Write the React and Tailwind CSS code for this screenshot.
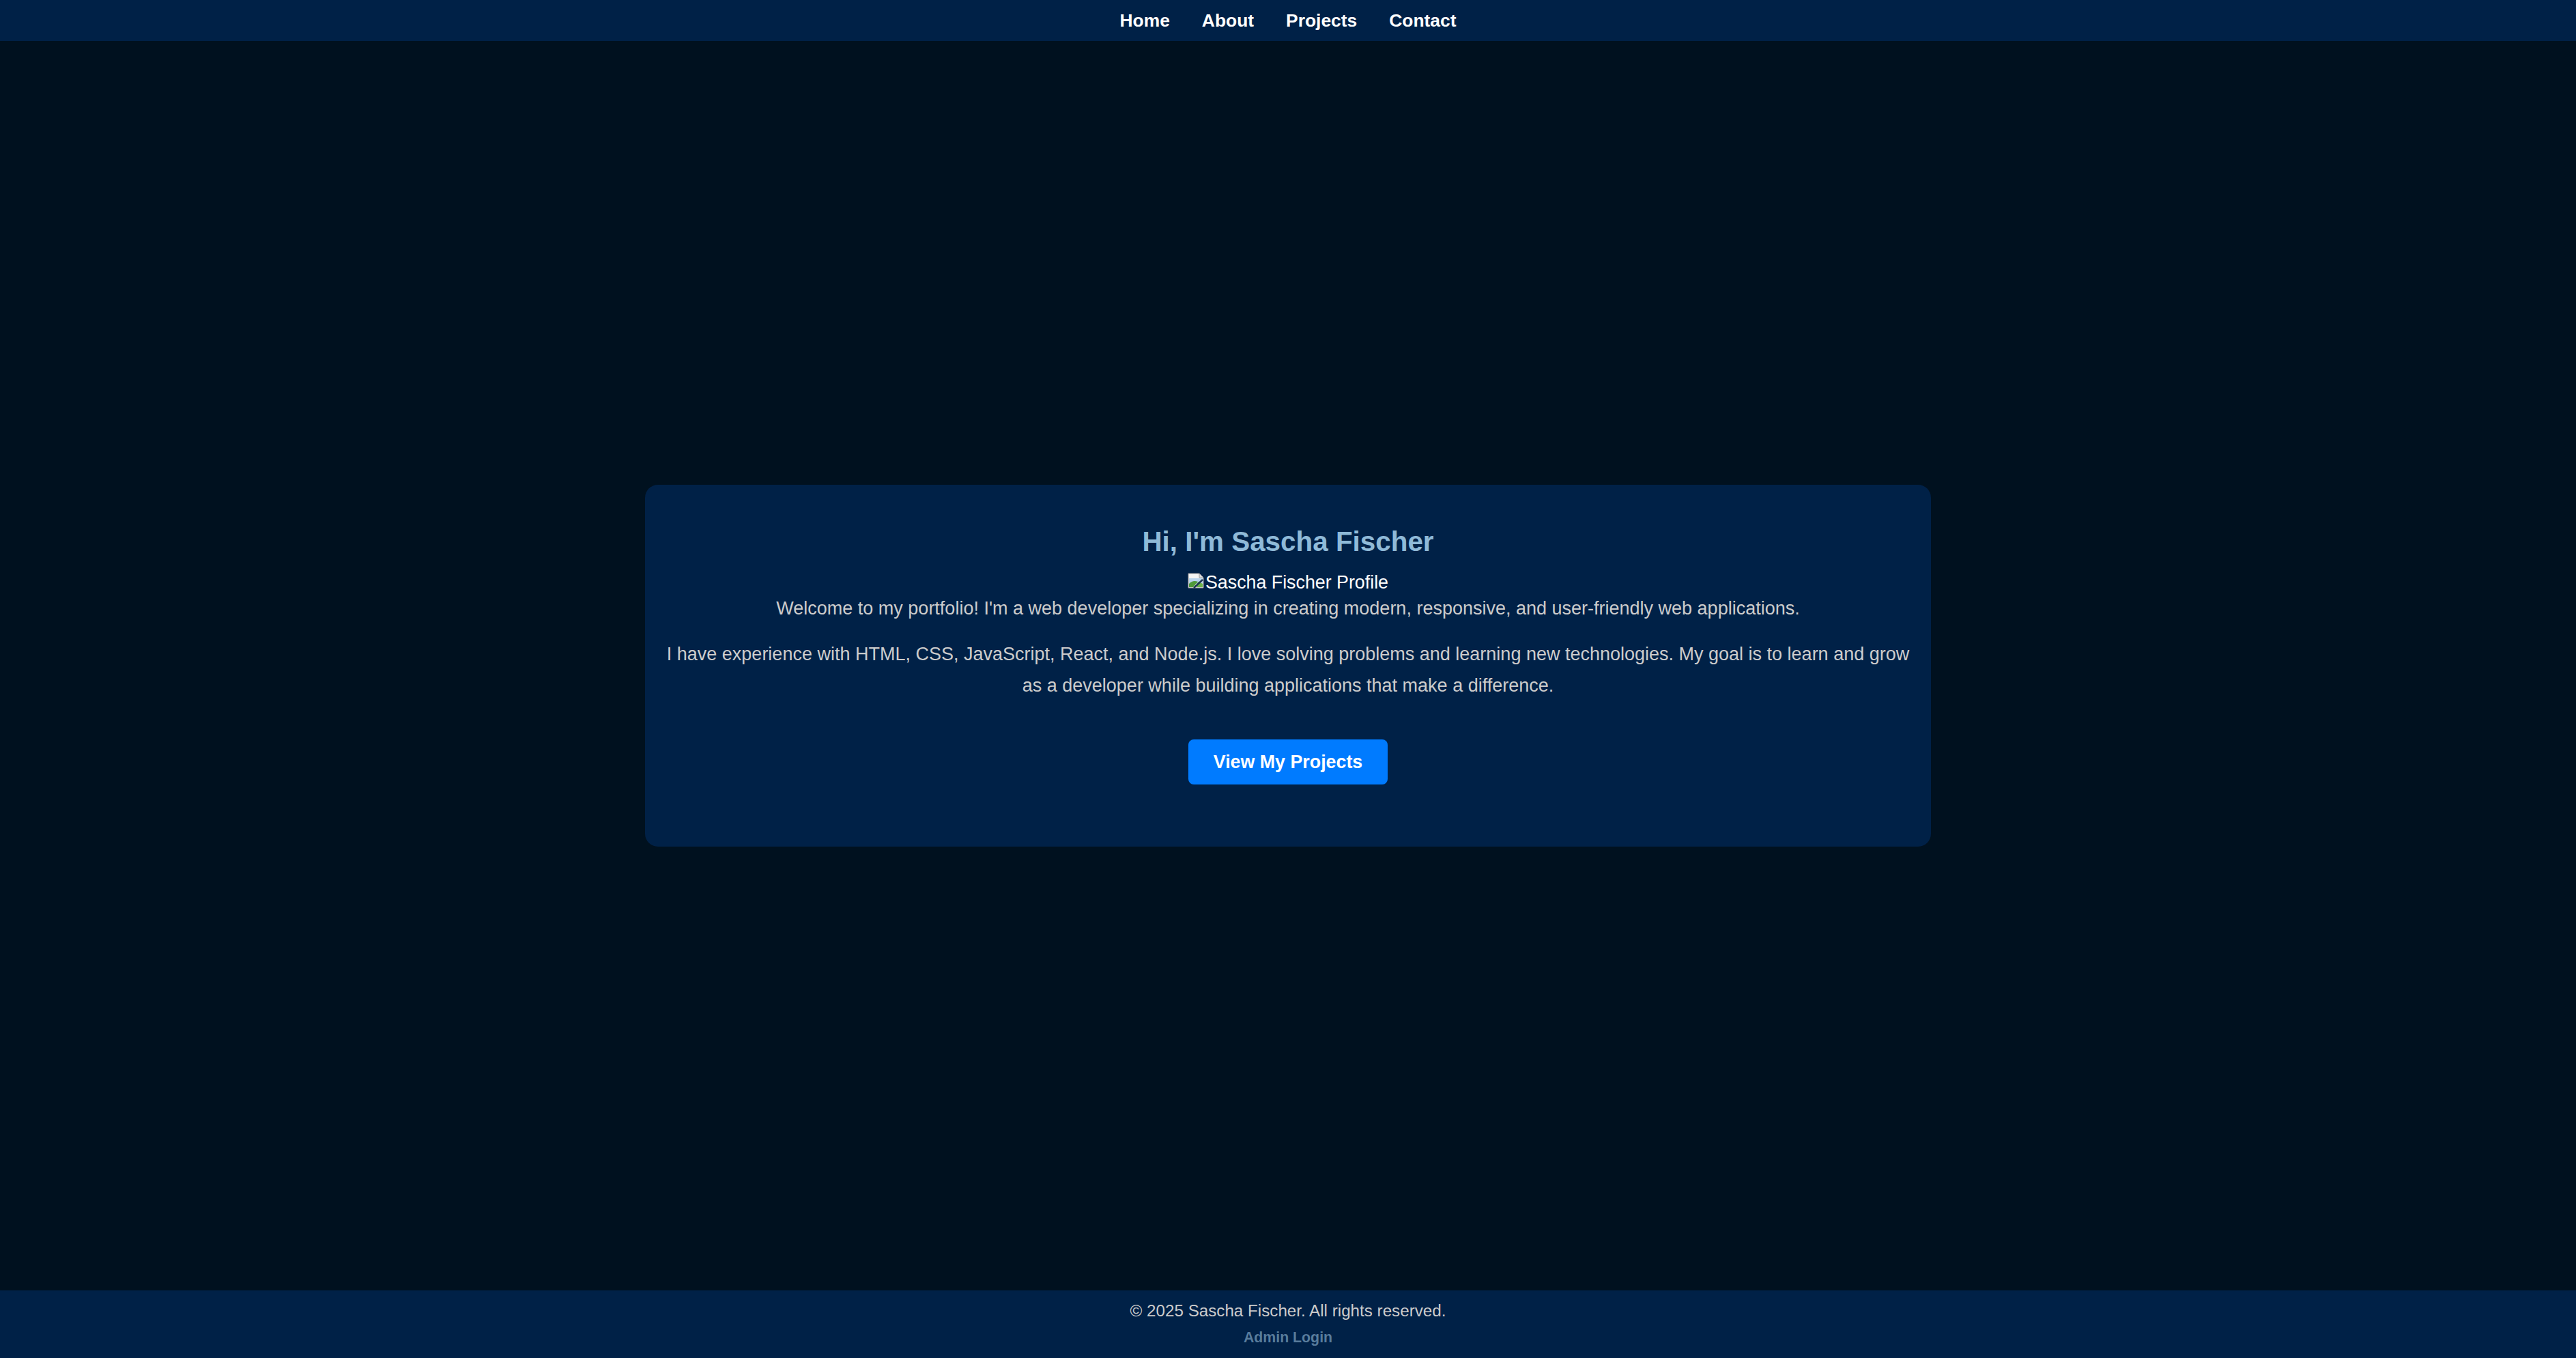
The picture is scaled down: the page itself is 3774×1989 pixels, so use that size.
const NavLink = ({ children }) => (
  <a href="#" className="text-white font-bold text-[26.4px] leading-[30px]">
    {children}
  </a>
);

const BrokenImage = () => (
  <svg width="25" height="23" viewBox="0 0 25 23" className="inline-block align-baseline mr-[1px]">
    <path d="M1 1h16l6 6v15H1z" fill="#f4f4f4" stroke="#9a9a9a" strokeWidth="1" />
    <path d="M17 1v6h6" fill="#dcdcdc" stroke="#9a9a9a" strokeWidth="1" />
    <path d="M2 8h20v8H2z" fill="#b9d4ec" />
    <path d="M2 16c4-4 8-5 13-3l-7 8H2z" fill="#4f9a3a" />
    <path d="M15 13c3 1 5 2 7 3v5h-9z" fill="#6cb34a" />
    <path d="M9 22l13-12" stroke="#1c3550" strokeWidth="2.5" />
  </svg>
);

export default function App() {
  return (
    <div
      className="min-h-screen flex flex-col bg-[#00111f]"
      style={{ fontFamily: '"Liberation Sans", Arial, sans-serif' }}
    >
      <nav className="h-[60px] bg-[#002147] flex items-center justify-center gap-[47px]">
        <NavLink>Home</NavLink>
        <NavLink>About</NavLink>
        <NavLink>Projects</NavLink>
        <NavLink>Contact</NavLink>
      </nav>

      <main className="flex-1 flex items-center justify-center">
        <section className="w-[1884px] bg-[#002147] rounded-[19px] px-[25px] pt-[60px] pb-[91px] text-center">
          <h2 className="text-[40.4px] leading-[46px] font-bold text-[#8fbad8]">Hi, I'm Sascha Fischer</h2>
          <div className="mt-[22px] text-[26.8px] leading-[30px] text-white">
            <BrokenImage />
            Sascha Fischer Profile
          </div>
          <p className="mt-[1px] text-[27px] leading-[45.4px] text-[#cccccc]">
            Welcome to my portfolio! I'm a web developer specializing in creating modern, responsive, and user-friendly web applications.
          </p>
          <p className="mt-[22px] text-[27px] leading-[45.4px] text-[#cccccc]">
            I have experience with HTML, CSS, JavaScript, React, and Node.js. I love solving problems and learning new technologies. My goal is to learn and grow as a developer while building applications that make a difference.
          </p>
          <a
            href="#"
            className="mt-[56px] inline-flex items-center justify-center h-[66px] w-[292px] rounded-[8px] bg-[#007bff] text-white font-bold text-[26.8px]"
          >
            View My Projects
          </a>
        </section>
      </main>

      <footer className="h-[99px] bg-[#002147] flex flex-col items-center pt-[16px]">
        <p className="text-[24.2px] leading-[28px] text-[#cccccc]">© 2025 Sascha Fischer. All rights reserved.</p>
        <a href="#" className="mt-[13px] text-[21.3px] leading-[25px] font-bold text-[#587c9c]">
          Admin Login
        </a>
      </footer>
    </div>
  );
}
